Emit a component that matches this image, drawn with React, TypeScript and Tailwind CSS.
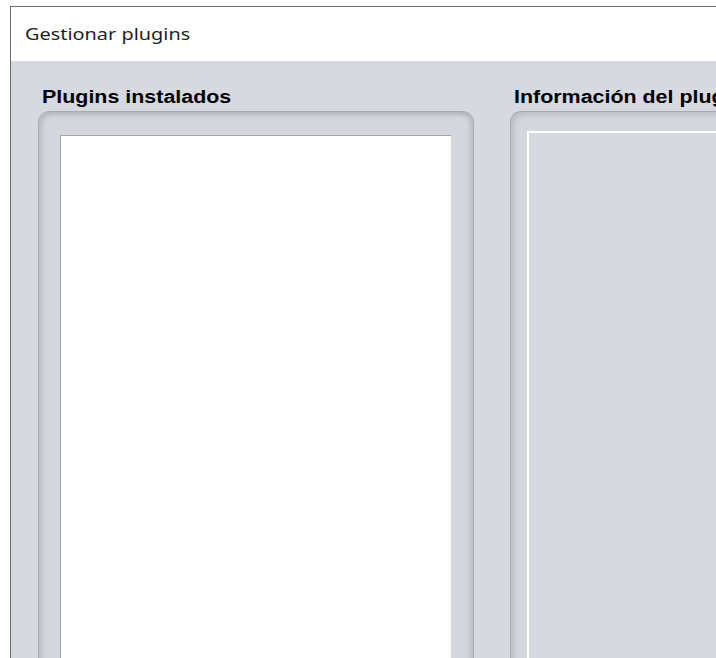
export default function App() {
  return (
    <div className="relative w-[716px] h-[658px] overflow-hidden bg-white">
      {/* dialog window */}
      <div className="ml-[10px] mt-[6px] flex h-[652px] w-[760px] flex-col border-l border-t border-[#6b6d72]">
        <div className="flex h-[54px] shrink-0 items-center bg-white pl-[14px] text-[17px] text-[#1f1f1f] [font-family:'Noto_Sans',sans-serif]">
          <span className="inline-block origin-left scale-x-[1.17]">Gestionar plugins</span>
        </div>

        <div className="flex flex-1 gap-[36px] bg-[#d6d9e0] pl-[27px] pt-[26px] [font-family:'Liberation_Sans',Arial,sans-serif]">
          {/* installed plugins */}
          <div className="flex w-[436px] shrink-0 flex-col">
            <div className="ml-[4px] h-[24px] text-[18px] font-bold leading-[20px] text-black">
              <span className="inline-block origin-left scale-x-[1.19] whitespace-nowrap">Plugins instalados</span>
            </div>
            <div className="flex h-[600px] flex-col rounded-t-[11px] border border-[#a9acb2] bg-[#d4d7de] pl-[21px] pr-[22px] pt-[23px] shadow-[inset_3px_3px_5px_rgba(0,0,0,0.12),inset_-3px_0_5px_rgba(0,0,0,0.12)]">
              <div className="flex-1 border-l border-t border-[#a2a5ab] bg-white" />
            </div>
          </div>

          {/* plugin info */}
          <div className="flex w-[300px] shrink-0 flex-col">
            <div className="ml-[4px] h-[24px] text-[18px] font-bold leading-[20px] text-black">
              <span className="inline-block origin-left scale-x-[1.19] whitespace-nowrap">Información del plugin</span>
            </div>
            <div className="flex h-[600px] flex-col rounded-tl-[11px] border-l border-t border-[#a9acb2] bg-[#d4d7de] pl-[16px] pt-[19px] shadow-[inset_3px_3px_5px_rgba(0,0,0,0.12)]">
              <div className="flex-1 border-l-2 border-t-2 border-white bg-[#d6d9e0]" />
            </div>
          </div>
        </div>
      </div>
    </div>
  );
}
